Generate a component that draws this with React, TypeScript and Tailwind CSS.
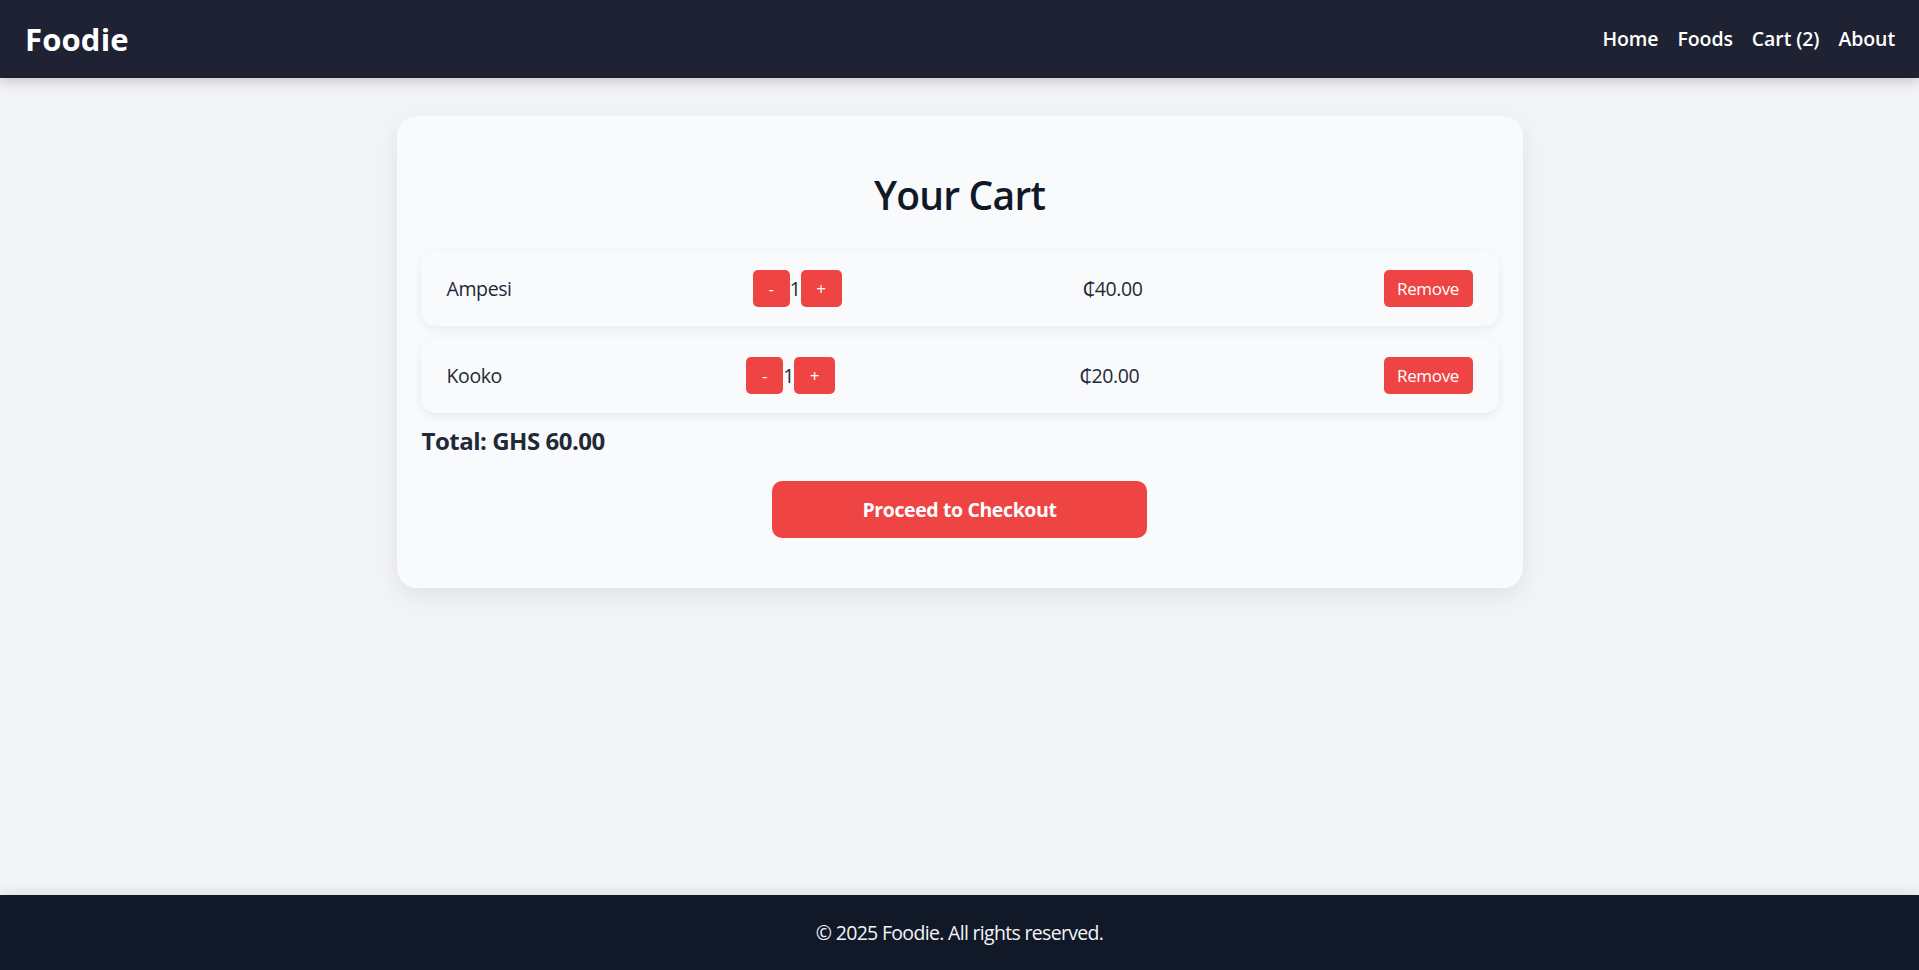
import React from 'react';

interface CartItem {
  name: string;
  qty: number;
  price: number;
}

const items: CartItem[] = [
  { name: 'Ampesi', qty: 1, price: 40 },
  { name: 'Kooko', qty: 1, price: 20 },
];

const navLinks = ['Home', 'Foods', 'Cart (2)', 'About'];

function Header() {
  return (
    <header className="relative z-10 flex h-[78px] shrink-0 items-center justify-between bg-[#1e2233] px-[24px] shadow-[0_4px_12px_rgba(0,0,0,0.18)]">
      <span className="pl-[1px] text-[31px] font-bold tracking-[0.005em] text-white">Foodie</span>
      <nav className="flex items-center gap-[19px] text-[19.5px] font-semibold text-white">
        {navLinks.map((l) => (
          <a key={l} href="#" className="tracking-[-0.005em]">
            {l}
          </a>
        ))}
      </nav>
    </header>
  );
}

function CartRow({ item }: { item: CartItem }) {
  return (
    <div className="flex h-[75px] items-center justify-between rounded-[15px] bg-[#f9fafb] px-[26px] shadow-[0_3px_10px_rgba(0,0,0,0.07)]">
      <span className="text-[19.5px] tracking-[-0.02em] text-[#1f2937]">{item.name}</span>
      <div className="flex items-center">
        <button className="flex h-[37px] w-[37px] items-center justify-center rounded-[5px] bg-[#ef4444] text-[17px] text-white">
          -
        </button>
        <span className="w-[11px] text-center text-[19.5px] text-[#1f2937]">{item.qty}</span>
        <button className="flex h-[37px] w-[41px] items-center justify-center rounded-[5px] bg-[#ef4444] text-[17px] text-white">
          +
        </button>
      </div>
      <span className="text-[19.5px] tracking-[-0.02em] text-[#1f2937]">₵{item.price.toFixed(2)}</span>
      <button className="flex h-[37px] w-[89px] items-center justify-center rounded-[5px] bg-[#ef4444] text-[17px] tracking-[-0.02em] text-white">
        Remove
      </button>
    </div>
  );
}

export default function App() {
  const total = items.reduce((s, i) => s + i.qty * i.price, 0);
  return (
    <div
      className="flex min-h-screen flex-col bg-[#f3f4f6]"
      style={{ fontFamily: '"Open Sans", "Noto Sans", "DejaVu Sans", sans-serif' }}
    >
      <Header />
      <main className="flex-1 pt-[38px]">
        <div className="mx-auto w-[1126px] rounded-[20px] bg-[#f9fafb] px-[24px] pb-[50px] pt-[55px] shadow-[0_8px_24px_rgba(0,0,0,0.08)]">
          <h1 className="mb-[33px] text-center text-[39px] leading-[47px] font-semibold tracking-[-0.02em] text-[#111827]">
            Your Cart
          </h1>
          <div className="flex flex-col gap-[12px]">
            {items.map((it) => (
              <CartRow key={it.name} item={it} />
            ))}
          </div>
          <p className="mt-[11px] pl-[1px] text-[24px] leading-[34px] font-bold tracking-[-0.02em] text-[#1f2937]">
            Total: GHS {total.toFixed(2)}
          </p>
          <div className="mt-[23px] flex justify-center">
            <button className="h-[57px] w-[375px] rounded-[10px] bg-[#ef4444] text-[19.5px] font-bold tracking-[-0.02em] text-white">
              Proceed to Checkout
            </button>
          </div>
        </div>
      </main>
      <footer className="flex h-[75px] shrink-0 items-center justify-center bg-[#111827] text-[19.5px] tracking-[-0.035em] text-[#f3f4f6] shadow-[0_-4px_12px_rgba(0,0,0,0.08)]">
        © 2025 Foodie. All rights reserved.
      </footer>
    </div>
  );
}
